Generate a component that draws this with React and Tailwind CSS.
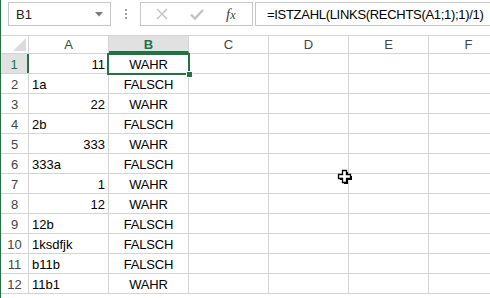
import React from 'react';

const rows = [
    ['11', 'WAHR'],
    ['1a', 'FALSCH'],
    ['22', 'WAHR'],
    ['2b', 'FALSCH'],
    ['333', 'WAHR'],
    ['333a', 'FALSCH'],
    ['1', 'WAHR'],
    ['12', 'WAHR'],
    ['12b', 'FALSCH'],
    ['1ksdfjk', 'FALSCH'],
    ['b11b', 'FALSCH'],
    ['11b1', 'WAHR'],
];

const cols = ['A', 'B', 'C', 'D', 'E', 'F'];

// a cell is a number when it parses fully, numbers go right like in excel
const isNum = (v) => /^\d+$/.test(v);

const App = () => {
    return (
        <div
            className="relative w-[490px] h-[298px] overflow-hidden bg-white border-l border-[#217346] text-[13px] text-black"
            style={{ fontFamily: '"Liberation Sans", Arial, sans-serif' }}
        >
            {/* formula bar */}
            <div className="flex h-[35px] pt-[2px]">
                <div className="shrink-0 ml-[7px] w-[103px] h-[24px] border border-[#c6c6c6] flex items-center justify-between pl-[7px] pr-[7px]">
                    <span className="text-[#222] leading-none">B1</span>
                    <svg width="8" height="5" viewBox="0 0 8 5">
                        <path d="M0 0 L8 0 L4 4.5 Z" fill="#7a7a7a" />
                    </svg>
                </div>
                <div className="shrink-0 w-[29px] h-[24px] flex flex-col items-center justify-center gap-[2px]">
                    <span className="w-[2px] h-[2px] bg-[#a0a0a0]" />
                    <span className="w-[2px] h-[2px] bg-[#a0a0a0]" />
                    <span className="w-[2px] h-[2px] bg-[#a0a0a0]" />
                </div>
                <div className="shrink-0 w-[113px] h-[24px] border border-[#c6c6c6] flex items-center pl-[15px]">
                    <svg width="12" height="12" viewBox="0 0 12 12">
                        <path d="M1 1 L11 11 M11 1 L1 11" stroke="#c2c2c2" strokeWidth="1.4" />
                    </svg>
                    <svg className="ml-[22px]" width="14" height="11" viewBox="0 0 14 11">
                        <path d="M1 5.5 L5 9.5 L13 1" stroke="#c2c2c2" strokeWidth="2.4" fill="none" />
                    </svg>
                    <span
                        className="ml-[22px] italic text-[#444] text-[15px] leading-none"
                        style={{ fontFamily: '"Liberation Serif", "Times New Roman", serif' }}
                    >
                        f<span className="text-[12px]">x</span>
                    </span>
                </div>
                <div className="shrink-0 ml-[2px] w-[260px] h-[24px] border border-[#c6c6c6] flex items-center pl-[11px]">
                    <span className="tracking-[-0.3px] leading-none">=ISTZAHL(LINKS(RECHTS(A1;1);1)/1)</span>
                </div>
            </div>

            {/* column header */}
            <div className="flex h-[19px] border-t border-b border-[#d4d4d4]">
                <div className="relative shrink-0 w-[28px] border-r border-[#d4d4d4]">
                    <svg className="absolute right-[2px] bottom-[2px]" width="13" height="13" viewBox="0 0 13 13">
                        <path d="M13 0 L13 13 L0 13 Z" fill="#dcdcdc" />
                    </svg>
                </div>
                {cols.map((c) => (
                    <div
                        key={c}
                        className={
                            c === 'B'
                                ? 'w-[80px] shrink-0 border-r border-[#d4d4d4] bg-[#e1e1e1] text-[#217346] font-bold text-center leading-[17px] border-b-2 border-b-[#217346]'
                                : 'w-[80px] shrink-0 border-r border-[#d4d4d4] text-[#444] text-center leading-[17px]'
                        }
                    >
                        {c}
                    </div>
                ))}
            </div>

            {/* rows */}
            {rows.map(([a, b], i) => (
                <div key={i} className="flex h-[20px] border-b border-[#d4d4d4]">
                    <div
                        className={
                            i === 0
                                ? 'shrink-0 w-[28px] border-r-2 border-[#217346] bg-[#e1e1e1] text-[#217346] text-center pt-[3px] leading-[16px]'
                                : 'shrink-0 w-[28px] border-r border-[#d4d4d4] text-[#444] text-center pt-[3px] leading-[16px]'
                        }
                    >
                        {i + 1}
                    </div>
                    <div
                        className={
                            isNum(a)
                                ? 'w-[80px] shrink-0 border-r border-[#d4d4d4] text-right pr-[3px] pt-[3px] leading-[16px]'
                                : 'w-[80px] shrink-0 border-r border-[#d4d4d4] text-left pl-[3px] pt-[3px] leading-[16px]'
                        }
                    >
                        {a}
                    </div>
                    <div className="w-[80px] shrink-0 border-r border-[#d4d4d4] text-center pt-[3px] leading-[16px] tracking-[-0.2px]">
                        {b}
                    </div>
                    <div className="w-[80px] shrink-0 border-r border-[#d4d4d4]" />
                    <div className="w-[80px] shrink-0 border-r border-[#d4d4d4]" />
                    <div className="w-[80px] shrink-0 border-r border-[#d4d4d4]" />
                    <div className="w-[80px] shrink-0 border-r border-[#d4d4d4]" />
                </div>
            ))}

            {/* selection on B1 */}
            <div className="absolute left-[106px] top-[53px] w-[83px] h-[22px] border-2 border-[#217346]" />
            <div className="absolute left-[185px] top-[71px] w-[7px] h-[7px] bg-[#217346] border border-white" />

            {/* cell cursor */}
            <svg className="absolute left-[336px] top-[169px]" width="16" height="16" viewBox="0 0 16 16">
                <path d="M6 2 H10 V6 H14 V10 H10 V14 H6 V10 H2 V6 H6 Z" fill="#000" transform="translate(1 1)" />
                <path d="M5.5 1.5 H9.5 V5.5 H13.5 V9.5 H9.5 V13.5 H5.5 V9.5 H1.5 V5.5 H5.5 Z" fill="#fff" stroke="#000" strokeWidth="1.3" />
            </svg>
        </div>
    );
};

export default App;
